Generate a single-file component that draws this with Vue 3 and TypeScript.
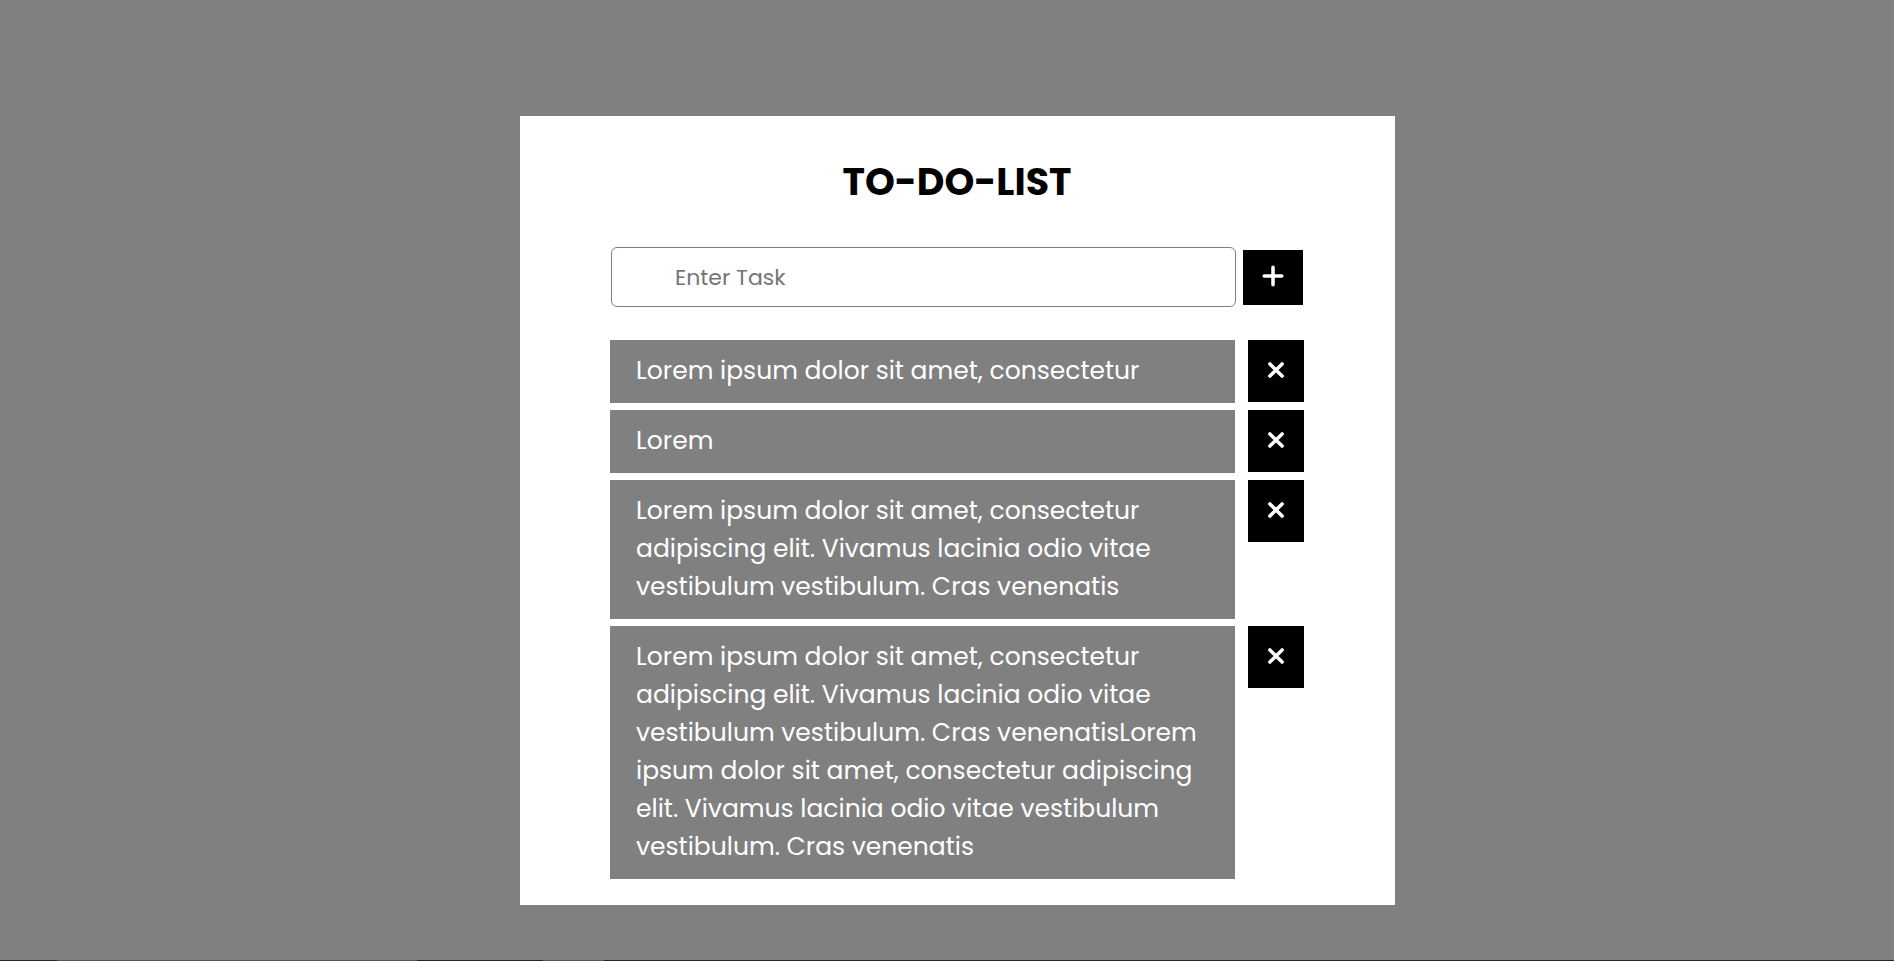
<script setup lang="ts">
import { ref } from 'vue'

interface Task {
  id: number
  text: string
}

const draft = ref('')
const nextId = ref(5)
const tasks = ref<Task[]>([
  { id: 1, text: 'Lorem ipsum dolor sit amet, consectetur' },
  { id: 2, text: 'Lorem' },
  {
    id: 3,
    text: 'Lorem ipsum dolor sit amet, consectetur adipiscing elit. Vivamus lacinia odio vitae vestibulum vestibulum. Cras venenatis',
  },
  {
    id: 4,
    text: 'Lorem ipsum dolor sit amet, consectetur adipiscing elit. Vivamus lacinia odio vitae vestibulum vestibulum. Cras venenatisLorem ipsum dolor sit amet, consectetur adipiscing elit. Vivamus lacinia odio vitae vestibulum vestibulum. Cras venenatis',
  },
])

function addTask(): void {
  const text = draft.value.trim()
  if (!text) return
  tasks.value.push({ id: nextId.value++, text })
  draft.value = ''
}

function removeTask(id: number): void {
  tasks.value = tasks.value.filter((task) => task.id !== id)
}
</script>

<template>
  <div class="page">
    <main class="stage">
      <section class="card">
        <h1 class="title">TO-DO-LIST</h1>
        <form class="entry" @submit.prevent="addTask">
          <input v-model="draft" class="field" type="text" placeholder="Enter Task" aria-label="Enter Task" />
          <button class="add" type="submit" aria-label="Add task">
            <svg width="22" height="22" viewBox="0 0 22 22" aria-hidden="true">
              <path d="M11 2.2V19.8M2.2 11H19.8" />
            </svg>
          </button>
        </form>
        <ul class="list">
          <li v-for="task in tasks" :key="task.id" class="row">
            <span class="text">{{ task.text }}</span>
            <button class="remove" type="button" aria-label="Remove task" @click="removeTask(task.id)">
              <svg width="18" height="18" viewBox="0 0 18 18" aria-hidden="true">
                <path d="M2.9 2.9L15.1 15.1M15.1 2.9L2.9 15.1" />
              </svg>
            </button>
          </li>
        </ul>
      </section>
    </main>
    <div class="edge"></div>
  </div>
</template>

<style>
body {
  margin: 0;
  background: #808080;
}
</style>

<style scoped>
.page {
  box-sizing: border-box;
  display: flex;
  flex-direction: column;
  min-height: 100vh;
  background: #808080;
  font-family: Poppins, Inter, 'Open Sans', sans-serif;
}

.stage {
  display: flex;
  justify-content: center;
  padding: 116px 0 0 21px;
}

.card {
  box-sizing: border-box;
  width: 875px;
  max-width: 100%;
  padding: 38px 91px 26px 90px;
  background: #fff;
}

.title {
  margin: 0;
  color: #000;
  font-size: 38px;
  line-height: 56px;
  font-weight: 700;
  text-align: center;
}

.entry {
  display: flex;
  align-items: center;
  gap: 7px;
  margin: 37px 1px 33px;
}

.field {
  box-sizing: border-box;
  flex: 1;
  min-width: 0;
  height: 60px;
  padding: 0 63px;
  border: 1px solid #808080;
  border-radius: 6px;
  background: #fff;
  color: #000;
  font-family: inherit;
  font-size: 22px;
}

.field::placeholder {
  color: #757575;
}

.add,
.remove {
  box-sizing: border-box;
  display: flex;
  flex: none;
  align-items: center;
  justify-content: center;
  padding: 0 0 3px;
  border: 0;
  background: #000;
  cursor: pointer;
}

.add {
  width: 60px;
  height: 55px;
}

.remove {
  width: 56px;
  height: 62px;
}

.add path,
.remove path {
  fill: none;
  stroke: #fff;
  stroke-width: 3.5;
  stroke-linecap: round;
}

.list {
  display: flex;
  flex-direction: column;
  gap: 7px;
  margin: 0;
  padding: 0;
  list-style: none;
}

.row {
  display: flex;
  align-items: flex-start;
  gap: 13px;
}

.text {
  box-sizing: border-box;
  flex: 1;
  min-width: 0;
  padding: 12px 26px 13px;
  background: #808080;
  color: #fff;
  font-size: 25px;
  line-height: 38px;
}

.edge {
  height: 1px;
  margin-top: auto;
  background: linear-gradient(
    to right,
    #2b2328 57px,
    #5b5358 57px 417px,
    #2b2328 417px 543px,
    #5b5358 543px 604px,
    #2b2328 604px
  );
}
</style>
